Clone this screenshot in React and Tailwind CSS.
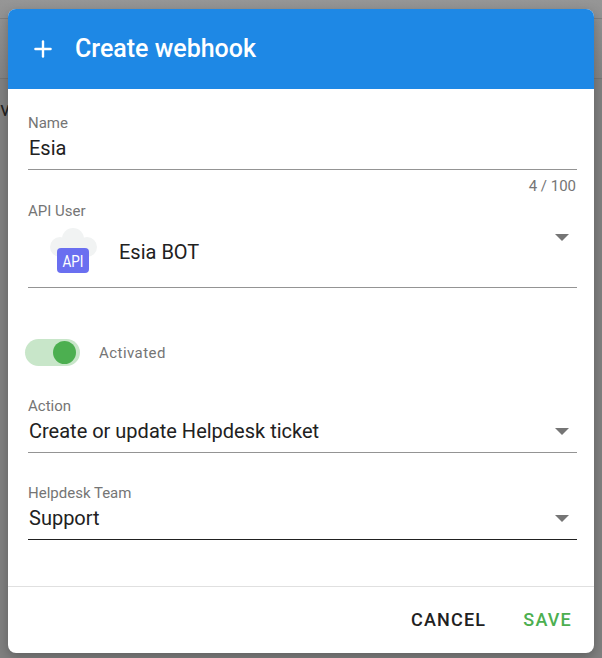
import { Plus } from 'lucide-react'

function Caret() {
  return <span className="w-0 h-0 border-x-[7px] border-x-transparent border-t-[7px] border-t-[#757575]" />
}

function SelectField({ label, value, active }) {
  return (
    <div>
      <div className="text-[15px] leading-[16px] text-[#757575]">{label}</div>
      <div className={`flex items-center justify-between h-[39px] pb-[4px] pl-px border-b ${active ? 'border-[#212121]' : 'border-[#949494]'}`}>
        <span className="text-[20px] text-[#212121]">{value}</span>
        <span className="flex mr-[8px]"><Caret /></span>
      </div>
    </div>
  )
}

function ApiIcon() {
  return (
    <svg width="50" height="50" viewBox="0 0 50 50">
      <circle cx="24" cy="15" r="11" fill="#f1f3f3" />
      <circle cx="11" cy="23" r="10" fill="#f1f3f3" />
      <circle cx="38" cy="23" r="10" fill="#f1f3f3" />
      <rect x="11" y="20" width="27" height="13" fill="#f1f3f3" />
      <rect x="8" y="24" width="32" height="25" rx="4" fill="#6a6ff0" />
      <text x="24" y="43" textAnchor="middle" fontSize="16" textLength="21" lengthAdjust="spacingAndGlyphs" fill="#fff" fontFamily="Roboto, sans-serif">API</text>
    </svg>
  )
}

export default function App() {
  return (
    <div className="relative w-[602px] h-[658px] overflow-hidden bg-[#808080] pt-[9px] pl-[8px] font-['Roboto',sans-serif]">
      {/* page behind the backdrop */}
      <div className="absolute top-0 left-0 right-0 h-[79px] bg-gradient-to-b from-[#969696] to-[#848484] border-b border-[#757575]" />
      <div className="absolute top-[18px] left-0 right-0 h-px bg-[#7f7f7f]" />
      <div className="absolute top-[94px] -left-[8px] text-[20px] text-[#222]">/v</div>

      <div className="relative w-[586px] h-[644px] bg-white rounded-[8px] overflow-hidden flex flex-col shadow-[0_4px_12px_rgba(0,0,0,0.25)]">
        <header className="h-[80px] bg-[#1e88e5] flex items-center pl-[22px] shrink-0 text-white">
          <Plus size={26} strokeWidth={2.2} />
          <h1 className="ml-[19px] text-[25px] font-medium">Create webhook</h1>
        </header>

        <main className="flex-1 pl-[20px] pr-[17px] pt-[26px]">
          <div>
            <div className="text-[15px] leading-[16px] text-[#757575]">Name</div>
            <div className="h-[39px] pb-[4px] pl-px flex items-center border-b border-[#949494] text-[20px] text-[#212121]">Esia</div>
            <div className="text-right text-[15px] leading-[16px] mt-[8px] pr-px text-[#757575]">4 / 100</div>
          </div>

          <div className="mt-[9px]">
            <div className="text-[15px] leading-[16px] text-[#757575]">API User</div>
            <div className="flex items-center h-[69px] border-b border-[#949494]">
              <span className="ml-[21px] self-start mt-[5px] flex"><ApiIcon /></span>
              <span className="ml-[20px] mb-[2px] text-[20px] text-[#212121]">Esia BOT</span>
              <span className="ml-auto mr-[8px] mb-[32px] flex"><Caret /></span>
            </div>
          </div>

          <div className="flex items-center mt-[51px] -ml-[3px]">
            <span className="relative w-[55px] h-[27px] rounded-full bg-[#c8e6c9]">
              <span className="absolute right-[4px] top-[2px] w-[23px] h-[23px] rounded-full bg-[#4caf50]" />
            </span>
            <span className="ml-[19px] mt-px text-[15px] tracking-[0.45px] text-[#757575]">Activated</span>
          </div>

          <div className="mt-[32px]"><SelectField label="Action" value="Create or update Helpdesk ticket" /></div>
          <div className="mt-[32px]"><SelectField label="Helpdesk Team" value="Support" active /></div>
        </main>

        <footer className="h-[67px] pb-[2px] border-t border-[#e0e0e0] flex items-center justify-end pr-[22px] gap-[37px] shrink-0 text-[18px] font-medium tracking-[1.2px]">
          <button className="text-[#212121]">CANCEL</button>
          <button className="text-[#4caf50]">SAVE</button>
        </footer>
      </div>
    </div>
  )
}
